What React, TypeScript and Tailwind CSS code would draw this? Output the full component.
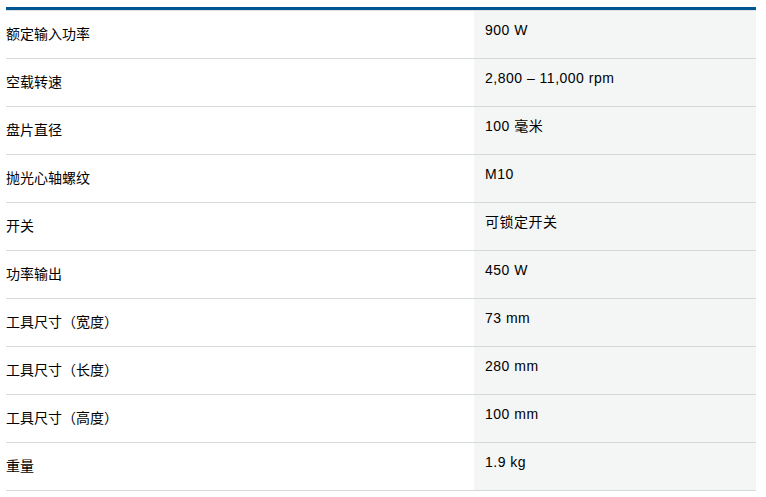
export default function App() {
  const specs = [
    ["额定输入功率", "900 W"],
    ["空载转速", "2,800 – 11,000 rpm"],
    ["盘片直径", "100 毫米"],
    ["抛光心轴螺纹", "M10"],
    ["开关", "可锁定开关"],
    ["功率输出", "450 W"],
    ["工具尺寸（宽度）", "73 mm"],
    ["工具尺寸（长度）", "280 mm"],
    ["工具尺寸（高度）", "100 mm"],
    ["重量", "1.9 kg"],
  ]

  return (
    <div className="min-h-screen bg-white px-[6px] pt-[7px] text-black">
      <div className="w-[750px] border-t-[3px] border-[#005691]">
        <div className="h-px bg-[#dfe2e4]" />
        {specs.map(([label, value]) => (
          <div key={label} className="grid h-[48px] grid-cols-[468px_282px] border-b border-[#d6d9dc]">
            <div className="flex items-center pb-[2px] font-['Noto_Sans_CJK_SC',sans-serif] text-[14px]">{label}</div>
            <div className="bg-[#f4f5f5] pl-[11px] pt-[9px] font-['Liberation_Sans','Noto_Sans_CJK_SC',sans-serif] text-[14px] leading-[20px] tracking-[0.5px]">
              {value}
            </div>
          </div>
        ))}
      </div>
    </div>
  )
}
